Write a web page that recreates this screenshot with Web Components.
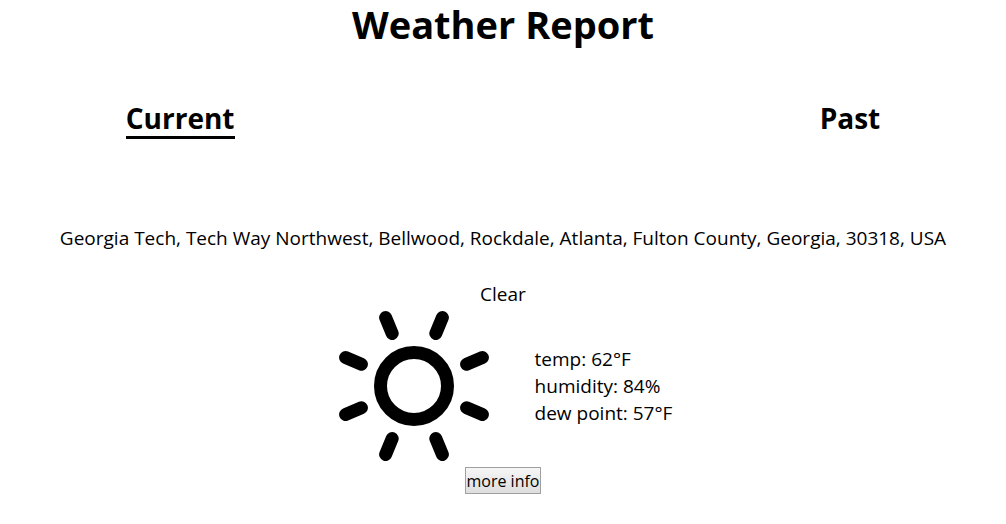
<!DOCTYPE html>
<html lang="en">
<head>
<meta charset="utf-8">
<title>Weather Report</title>
<style>
body { margin: 0; background: #fff; color: #000; font: 19px/27px "Segoe UI", "Open Sans", sans-serif; }
</style>
</head>
<body>
<weather-app></weather-app>
<script>
const define = (name, html) => customElements.define(name, class extends HTMLElement {
  constructor() {
    super();
    this.attachShadow({ mode: "open" }).innerHTML = html;
  }
});

define("weather-tab", `
<style>
:host { display: block; font-size: 28px; line-height: 36px; font-weight: 700; }
a { display: block; color: inherit; text-decoration: none; border-bottom: 3px solid transparent; }
:host([selected]) a { border-color: currentColor; }
</style>
<a href="#"><slot></slot></a>`);

define("sun-icon", `
<style>
:host { display: block; flex: none; width: 150px; height: 150px; }
svg { display: block; width: 100%; height: 100%; }
</style>
<svg viewBox="0 0 150 150" fill="none" stroke="currentColor" stroke-width="13" role="img" aria-label="Sun">
  <circle cx="75" cy="75" r="33.5"/>
  <path stroke-linecap="round" d="M46.6 6.6 53.2 22.4M103.4 6.6 96.8 22.4M143.4 46.6 127.6 53.2M143.4 103.4 127.6 96.8M103.4 143.4 96.8 127.6M46.6 143.4 53.2 127.6M6.6 103.4 22.4 96.8M6.6 46.6 22.4 53.2"/>
</svg>`);

define("weather-conditions", `
<style>
:host { display: flex; flex-direction: column; align-items: center; }
p { margin: 0 0 3px; }
.row { display: flex; align-items: center; gap: 46px; padding-left: 5px; }
button { margin-top: 6px; padding: 2px 1px 0; border: 1px solid #a0a0a0; border-radius: 0;
  background: linear-gradient(#f6f6f6, #dedede); color: inherit; font: inherit; font-size: 16px; line-height: 23px; }
</style>
<p><slot name="summary"></slot></p>
<div class="row"><sun-icon></sun-icon><div><slot></slot></div></div>
<button type="button">more info</button>`);

define("weather-app", `
<style>
:host { display: block; text-align: center; }
h1 { margin: 0; font-size: 38px; line-height: 48px; font-weight: 700; }
nav { display: flex; justify-content: space-between; padding: 52px 12.5% 0; }
address { margin: 86px 0 29px; font-style: normal; }
weather-conditions > div { text-align: left; }
</style>
<h1>Weather Report</h1>
<nav><weather-tab selected>Current</weather-tab><weather-tab>Past</weather-tab></nav>
<main>
  <address>Georgia Tech, Tech Way Northwest, Bellwood, Rockdale, Atlanta, Fulton County, Georgia, 30318, USA</address>
  <weather-conditions>
    <span slot="summary">Clear</span>
    <div>temp: 62°F</div>
    <div>humidity: 84%</div>
    <div>dew point: 57°F</div>
  </weather-conditions>
</main>`);
</script>
</body>
</html>
